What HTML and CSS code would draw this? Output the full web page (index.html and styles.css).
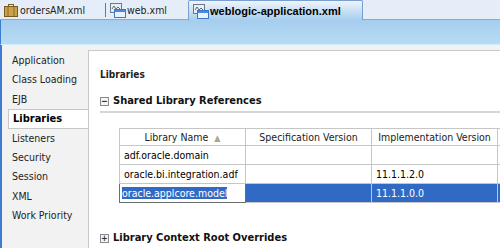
FILE: index.html
```html
<!DOCTYPE html>
<html lang="en">
<head>
    <meta charset="UTF-8">
    <title>weblogic-application.xml</title>
    <link rel="stylesheet" href="styles.css">
</head>
<body>
    <div class="tabs">
        <div class="tab first">
            <svg class="ico" width="16" height="16" viewBox="0 0 16 16">
                <rect x="1.5" y="4.5" width="13" height="10" fill="#c9a24a" stroke="#7a5a1e"/>
                <rect x="5.5" y="2.5" width="5" height="2" fill="none" stroke="#7a5a1e"/>
                <line x1="5" y1="5" x2="5" y2="14" stroke="#8a6a2a"/>
                <line x1="11" y1="5" x2="11" y2="14" stroke="#8a6a2a"/>
            </svg>
            ordersAM.xml
        </div>
        <div class="sep"></div>
        <div class="tab second">
            <svg class="ico" width="16" height="16" viewBox="0 0 16 16">
                <rect x="0.5" y="1.5" width="11" height="9" fill="#e8eef4" stroke="#6a7a8a"/>
                <path d="M2 7 L4 4 L6 7 L8 5 L10 7" fill="none" stroke="#5a6a7a"/>
                <rect x="4.5" y="7.5" width="11" height="8" fill="#e8f2fc" stroke="#3a78c8"/>
                <rect x="5" y="8" width="10" height="2" fill="#4a8ad8"/>
            </svg>
            web.xml
        </div>
        <div class="tab active">
            <svg class="ico" width="16" height="16" viewBox="0 0 16 16">
                <rect x="0.5" y="1.5" width="11" height="9" fill="#e8eef4" stroke="#6a7a8a"/>
                <path d="M2 7 L4 4 L6 7 L8 5 L10 7" fill="none" stroke="#5a6a7a"/>
                <rect x="4.5" y="7.5" width="11" height="8" fill="#e8f2fc" stroke="#3a78c8"/>
                <rect x="5" y="8" width="10" height="2" fill="#4a8ad8"/>
            </svg>
            weblogic-application.xml
        </div>
    </div>
    <div class="band"></div>
    <div class="main">
        <ul class="nav">
            <li>Application</li>
            <li>Class Loading</li>
            <li>EJB</li>
            <li class="current">Libraries</li>
            <li>Listeners</li>
            <li>Security</li>
            <li>Session</li>
            <li>XML</li>
            <li>Work Priority</li>
        </ul>
        <div class="content">
            <h2>Libraries</h2>
            <div class="section">
                <span class="toggle">−</span>Shared Library References
            </div>
            <table class="grid">
                <tr>
                    <th>Library Name <span class="sort">▲</span></th>
                    <th>Specification Version</th>
                    <th>Implementation Version</th>
                    <th class="extra"></th>
                </tr>
                <tr>
                    <td>adf.oracle.domain</td>
                    <td></td>
                    <td></td>
                    <td class="extra"></td>
                </tr>
                <tr>
                    <td>oracle.bi.integration.adf</td>
                    <td></td>
                    <td>11.1.1.2.0</td>
                    <td class="extra"></td>
                </tr>
                <tr class="selected">
                    <td class="editing"><span class="mark">oracle.applcore.model</span></td>
                    <td></td>
                    <td>11.1.1.0.0</td>
                    <td class="extra"></td>
                </tr>
            </table>
            <div class="section lower">
                <span class="toggle">+</span>Library Context Root Overrides
            </div>
        </div>
    </div>
</body>
</html>
```

FILE: styles.css
```css
body {
    margin: 0;
    width: 500px;
    height: 248px;
    overflow: hidden;
    font-family: "DejaVu Sans Condensed", "DejaVu Sans", sans-serif;
    font-size: 10.5px;
    color: #000;
    background-color: #f2f2f2;
}
.tabs {
    display: flex;
    align-items: flex-end;
    height: 20px;
    background-color: #e5eef8;
    border-bottom: 1px solid #86aade;
    box-sizing: border-box;
}
.tab {
    display: flex;
    align-items: center;
    height: 19px;
    padding: 0 0 0 3px;
    color: #222;
    box-sizing: border-box;
}
.tab.first {
    width: 104px;
}
.tab.second {
    width: 76px;
    padding-left: 4px;
}
.ico {
    margin-right: 1px;
}
.sep {
    width: 1px;
    height: 14px;
    margin: 0 0 2px 1px;
    background-color: #777;
}
.tab.active {
    width: 175px;
    height: 20px;
    margin-left: 6px;
    margin-bottom: -1px;
    padding-left: 4px;
    font-family: "Liberation Sans", Arial, sans-serif;
    font-size: 11px;
    font-weight: bold;
    color: #000;
    background: linear-gradient(#eef4fb, #a7cfee);
    border: 1px solid #7a9ed0;
    border-bottom: none;
    border-radius: 2px 2px 0 0;
}
.band {
    height: 24px;
    background: linear-gradient(#a6cdee, #b6dcf4);
    border-left: 1px solid #3e7cd2;
    border-bottom: 1px solid #cdeefb;
}
.main {
    display: flex;
    height: 203px;
    border-left: 2px solid #3e7cd2;
}
.nav {
    list-style: none;
    margin: 0;
    padding: 6px 0 0 6px;
    width: 80px;
}
.nav li {
    height: 19.4px;
    line-height: 19.4px;
    padding-left: 4px;
    color: #222;
}
.nav li.current {
    background-color: #fff;
    font-size: 11px;
    font-weight: bold;
    color: #000;
    border: 1px solid #c8c8c8;
    border-right: none;
    height: 17.4px;
    line-height: 17.4px;
}
.content {
    flex: 1;
    margin-top: 5px;
    padding: 0 0 0 11px;
    background-color: #fff;
    border-top: 1px solid #c8c8c8;
    border-left: 1px solid #c8c8c8;
    overflow: hidden;
}
.content h2 {
    margin: 17px 0 0;
    font-size: 10px;
    font-weight: bold;
    line-height: 14px;
    color: #222;
}
.section {
    display: flex;
    align-items: center;
    margin-top: 12px;
    padding-bottom: 3px;
    border-bottom: 2px solid #d6d6d6;
    font-weight: bold;
    font-size: 11px;
    line-height: 14px;
    color: #111;
}
.toggle {
    display: inline-flex;
    align-items: center;
    justify-content: center;
    width: 7px;
    height: 7px;
    margin-right: 4px;
    border: 1px solid #8a8a8a;
    background-color: #f4f4f4;
    font-size: 9px;
    line-height: 7px;
    font-weight: bold;
    color: #333;
}
.grid {
    margin: 15px 0 0 19px;
    border-collapse: collapse;
    border: 1px solid #8c8c8c;
    border-right: none;
    table-layout: fixed;
    width: 400px;
}
.grid th,
.grid td {
    width: 126px;
    height: 19px;
    padding: 0 4px;
    border: 1px solid #c6c6c6;
    text-align: left;
    white-space: nowrap;
    box-sizing: border-box;
}
.grid th {
    height: 17px;
    font-weight: normal;
    text-align: center;
    color: #222;
}
.grid .extra {
    width: 22px;
}
.sort {
    color: #a8a892;
    font-size: 9px;
    margin-left: 3px;
}
.selected td {
    background-color: #316ac5;
    color: #fff;
}
.selected td.editing {
    background-color: #fff;
    border: 1px solid #6c6c6c;
    padding-left: 2px;
}
.mark {
    background-color: #316ac5;
    color: #fff;
}
.section.lower {
    margin-top: 28px;
}
```
